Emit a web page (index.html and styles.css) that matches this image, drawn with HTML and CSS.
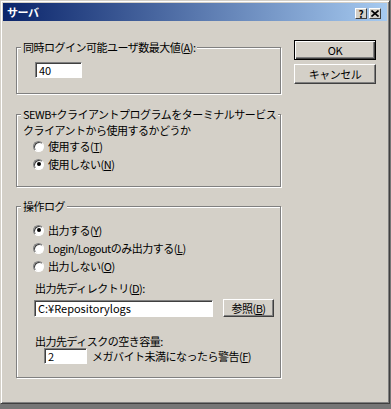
FILE: index.html
```html
<!DOCTYPE html>
<html lang="ja">
<head>
  <meta charset="UTF-8">
  <title>サーバ</title>
  <link rel="stylesheet" href="styles.css">
</head>
<body>

  <div class="window">
    <div class="titlebar">
      <span class="title">サーバ</span>
      <div class="caption-buttons">
        <span class="cap-btn cap-help">?</span>
        <span class="cap-btn cap-close">
          <svg width="8" height="7" viewBox="0 0 8 7"><path d="M0.5 0.5 L7.5 6.5 M7.5 0.5 L0.5 6.5" stroke="#000" stroke-width="1.6" fill="none"/></svg>
        </span>
      </div>
    </div>

    <div class="dialog">
      <div class="main">
        <!-- Nombre max d'utilisateurs -->
        <fieldset class="group group-max">
          <legend>同時ログイン可能ユーザ数最大値(<u>A</u>):</legend>
          <div class="edit edit-max">40</div>
        </fieldset>

        <!-- Terminal service -->
        <fieldset class="group group-ts">
          <legend>SEWB+クライアントプログラムをターミナルサービス</legend>
          <p class="sub">クライアントから使用するかどうか</p>
          <label class="radio"><span class="dot"></span>使用する(<u>T</u>)</label>
          <label class="radio checked"><span class="dot"></span>使用しない(<u>N</u>)</label>
        </fieldset>

        <!-- Log -->
        <fieldset class="group group-log">
          <legend>操作ログ</legend>
          <div class="log-radios">
            <label class="radio checked"><span class="dot"></span>出力する(<u>Y</u>)</label>
            <label class="radio"><span class="dot"></span>Login/Logoutのみ出力する(<u>L</u>)</label>
            <label class="radio"><span class="dot"></span>出力しない(<u>O</u>)</label>
          </div>
          <p class="label label-dir">出力先ディレクトリ(<u>D</u>):</p>
          <div class="row row-dir">
            <div class="edit edit-dir">C:¥Repositorylogs</div>
            <button class="btn btn-browse">参照(<u>B</u>)</button>
          </div>
          <p class="label label-free">出力先ディスクの空き容量:</p>
          <div class="row row-free">
            <div class="edit edit-free">2</div>
            <span class="unit">メガバイト未満になったら警告(<u>F</u>)</span>
          </div>
        </fieldset>
      </div>

      <div class="side">
        <button class="btn btn-default">OK</button>
        <button class="btn btn-cancel">キャンセル</button>
      </div>
    </div>
  </div>

</body>
</html>
```

FILE: styles.css
```css
/* Global */
body {
  margin: 0;
  background: #767676;
  font-family: "Noto Sans CJK JP", "Noto Sans", sans-serif;
  font-size: 11px;
  color: #000;
}
u {
  text-decoration: underline;
  text-underline-offset: 1px;
}
/* Fenêtre */
.window {
  box-sizing: border-box;
  width: 390px;
  height: 404px;
  padding: 2px;
  background: #d4d0c8;
  border: 1px solid;
  border-color: #d4d0c8 #404040 #404040 #d4d0c8;
  box-shadow: inset 1px 1px 0 #fff, inset -1px -1px 0 #808080;
  display: flex;
  flex-direction: column;
  letter-spacing: -0.5px;
}
/* Barre de titre */
.titlebar {
  height: 18px;
  background: linear-gradient(90deg, #0a246a, #a6caf0);
  display: flex;
  align-items: center;
  justify-content: space-between;
  padding: 0 6px 0 4px;
}
.title {
  color: #fff;
  font-weight: bold;
  font-size: 11px;
  line-height: 18px;
}
.caption-buttons {
  display: flex;
  gap: 2px;
  margin-top: 3px;
}
.cap-btn {
  box-sizing: border-box;
  width: 12px;
  height: 11px;
  background: #d4d0c8;
  border: 1px solid;
  border-color: #fff #404040 #404040 #fff;
  display: flex;
  align-items: center;
  justify-content: center;
  font-weight: bold;
  font-size: 10px;
  line-height: 9px;
  letter-spacing: 0;
}
/* Contenu */
.dialog {
  display: flex;
  gap: 13px;
  padding: 19px 0 0 13px;
}
.main {
  width: 265px;
}
.side {
  width: 82px;
  display: flex;
  flex-direction: column;
  gap: 4px;
}
/* Cadres */
.group {
  margin: 0;
  padding: 0;
  min-width: 0;
  border: 1px solid #808080;
  box-shadow: inset 1px 1px 0 #fff, 1px 1px 0 #fff;
}
.group legend {
  margin-left: 4px;
  padding: 0 2px;
  line-height: 14px;
  background: #d4d0c8;
}
.group p {
  margin: 0;
  line-height: 14px;
}
.group-max {
  padding-bottom: 15px;
}
.group-ts {
  margin-top: 13px;
  padding-bottom: 13px;
}
.group-ts .radio {
  height: 18px;
}
.group-log {
  margin-top: 12px;
  padding-bottom: 13px;
}
.sub {
  margin: 2px 0 0 6px !important;
}
/* Boutons radio */
.radio {
  display: flex;
  align-items: center;
  height: 19px;
  margin-left: 16px;
}
.log-radios {
  margin-top: 8px;
}
.log-radios .radio {
  height: 18px;
}
.dot {
  box-sizing: border-box;
  width: 11px;
  height: 11px;
  margin-right: 4px;
  border-radius: 50%;
  background: #fff;
  border: 1px solid;
  border-color: #808080 #fff #fff #808080;
  box-shadow: inset 1px 1px 0 #404040;
  display: flex;
  align-items: center;
  justify-content: center;
}
.radio.checked .dot::after {
  content: "";
  width: 4px;
  height: 4px;
  border-radius: 50%;
  background: #000;
}
/* Zones de saisie */
.edit {
  box-sizing: border-box;
  background: #fff;
  border: 1px solid;
  border-color: #808080 #fff #fff #808080;
  box-shadow: inset 1px 1px 0 #404040;
  padding-left: 3px;
  line-height: 14px;
  letter-spacing: 0;
}
.edit-max {
  width: 47px;
  height: 16px;
  margin: 8px 0 0 18px;
}
.label {
  margin-left: 18px !important;
}
.label-dir {
  margin-top: 6px !important;
}
.label-free {
  margin-top: 17px !important;
}
.row {
  display: flex;
  align-items: center;
}
.row-dir {
  margin: 4px 0 0 17px;
}
.edit-dir {
  width: 179px;
  height: 17px;
}
.row-free {
  margin-left: 27px;
}
.edit-free {
  width: 43px;
  height: 16px;
}
.unit {
  margin-left: 5px;
}
/* Boutons */
.btn {
  box-sizing: border-box;
  padding: 0;
  font-family: inherit;
  font-size: 11px;
  letter-spacing: -0.5px;
  color: #000;
  background: #d4d0c8;
  border: 1px solid;
  border-color: #fff #404040 #404040 #fff;
  box-shadow: inset -1px -1px 0 #808080;
}
.btn-browse {
  width: 51px;
  height: 18px;
  margin-left: 10px;
}
.btn-default,
.btn-cancel {
  width: 82px;
  height: 20px;
}
.btn-default {
  border-color: #000;
  box-shadow: inset 1px 1px 0 #fff, inset -1px -1px 0 #404040, inset -2px -2px 0 #808080;
}
```
